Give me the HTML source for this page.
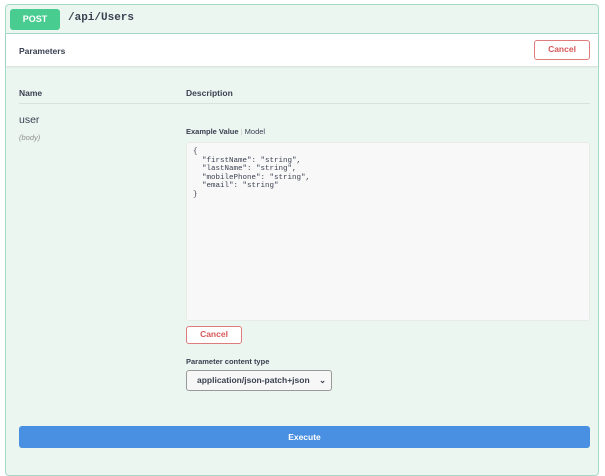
<!DOCTYPE html>
<html><head><style>
body{margin:0;width:605px;height:456px;background:#fff;font-family:"Liberation Sans",sans-serif;overflow:hidden;position:relative}
.box{position:absolute;left:5px;top:4px;width:592px;height:470px;border:1px solid #a6dac6;border-radius:4px;background:#ebf6f1}
.a{position:absolute}
.hdr{left:0;top:0;width:592px;height:28px;border-bottom:1px solid #a6dac6}
.post{left:4px;top:4px;width:50px;height:21px;background:#49cc90;border-radius:3px;color:#fff;font-weight:bold;font-size:9px;text-align:center;line-height:21px}
.path{left:62px;top:7px;font-family:"Liberation Mono",monospace;font-weight:bold;font-size:11px;color:#3b4151}
.par{left:0;top:29px;width:592px;height:32px;background:#fff;box-shadow:0 1px 2px rgba(0,0,0,.1)}
.b{font-weight:bold;font-size:8.5px;color:#3b4151}
.cancel{border:1.5px solid #e07b7b;border-radius:3px;color:#d85858;font-weight:bold;font-size:8.5px;text-align:center;background:#fff;box-sizing:border-box}
</style></head><body>
<div class="box">
<div class="a hdr"></div>
<div class="a post">POST</div>
<div class="a path">/api/Users</div>
<div class="a par"></div>
<div class="a b" style="left:13px;top:41px">Parameters</div>
<div class="a cancel" style="left:528px;top:35px;width:56px;height:20px;line-height:17px">Cancel</div>
<div class="a b" style="left:13px;top:83px">Name</div>
<div class="a b" style="left:180px;top:83px">Description</div>
<div class="a" style="left:13px;top:98px;width:571px;border-top:1px solid #d4e3dc"></div>
<div class="a" style="left:13px;top:109px;font-size:10.5px;color:#3b4151">user</div>
<div class="a" style="left:13px;top:128px;font-size:7.5px;font-style:italic;color:#909090">(body)</div>
<div class="a" style="left:180px;top:122px;font-size:7.5px;color:#3b4151"><b>Example Value</b> <span style="color:#ccc">|</span> Model</div>
<div class="a" style="left:180px;top:137px;width:402px;height:177px;background:#f8f8f8;border-radius:3px;border:1px solid #e8ece9"></div>
<pre class="a" style="margin:0;left:187px;top:143px;font-family:'Liberation Mono',monospace;font-size:7.5px;line-height:8.5px;color:#3b4151">{
  "firstName": "string",
  "lastName": "string",
  "mobilePhone": "string",
  "email": "string"
}</pre>
<div class="a cancel" style="left:180px;top:321px;width:56px;height:18px;line-height:15px">Cancel</div>
<div class="a" style="left:180px;top:352px;font-size:7.5px;font-weight:bold;color:#3b4151">Parameter content type</div>
<div class="a" style="left:180px;top:365px;width:146px;height:21px;border:1px solid #999;border-radius:3px;background:#f7f7f7;box-sizing:border-box;font-weight:bold;font-size:8.5px;color:#3b4151;line-height:19px;padding-left:10px">application/json-patch+json <span style="margin-left:7px">&#8964;</span></div>
<div class="a" style="left:13px;top:421px;width:571px;height:22px;background:#4990e2;border-radius:3px;color:#fff;font-weight:bold;font-size:8.5px;text-align:center;line-height:22px">Execute</div>
</div>
</body></html>
